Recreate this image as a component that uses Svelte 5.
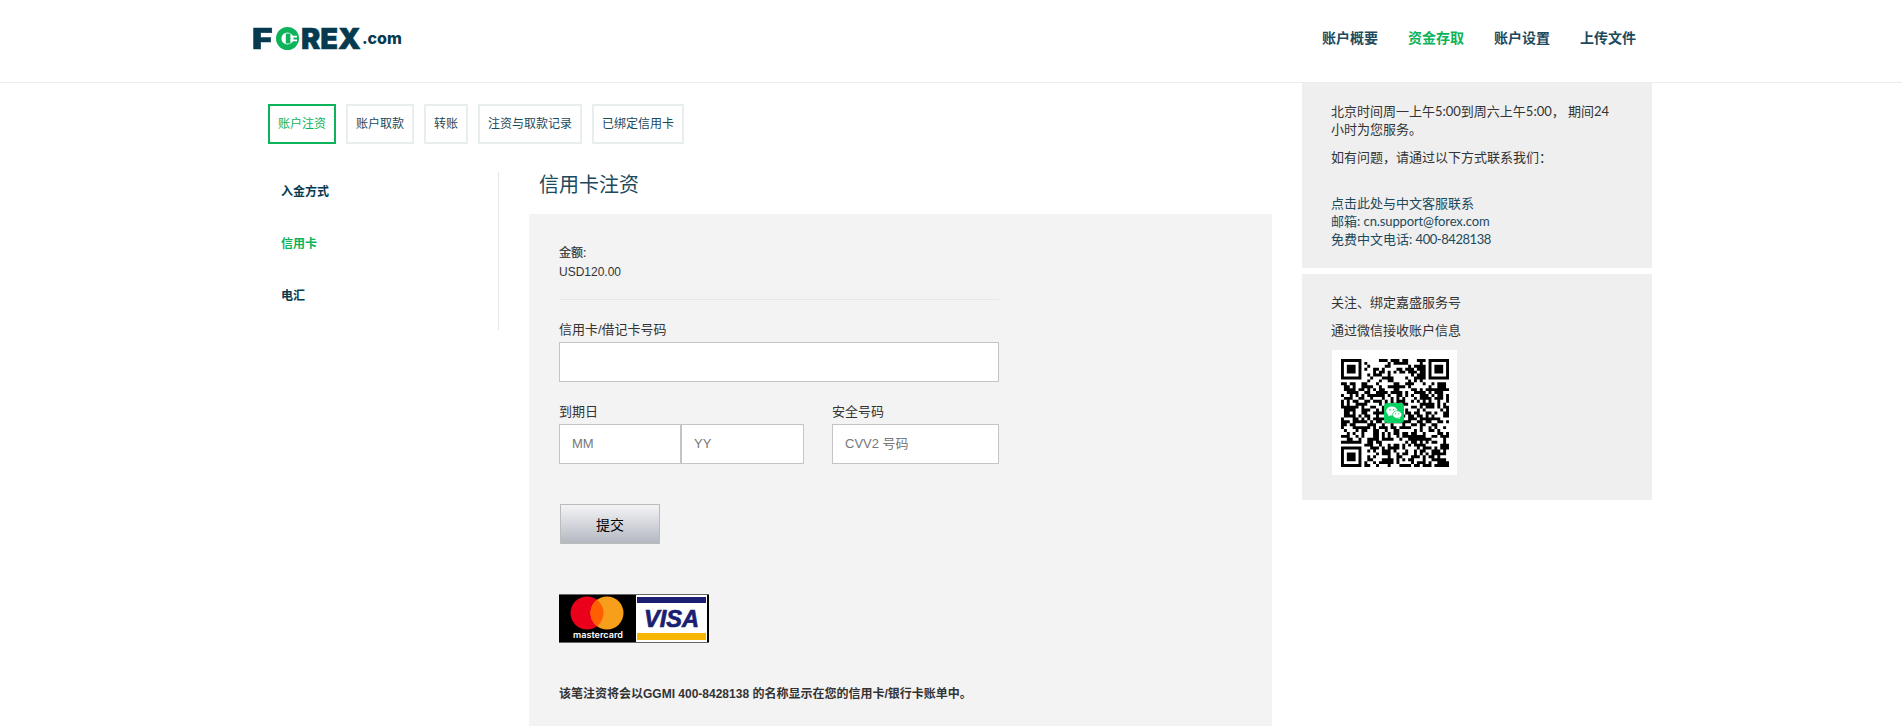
<script lang="ts">
  const navItems = [
    { label: '账户概要' },
    { label: '资金存取', active: true },
    { label: '账户设置' },
    { label: '上传文件' },
  ];
  const tabs = ['账户注资', '账户取款', '转账', '注资与取款记录', '已绑定信用卡'];
  const sideItems = [
    { label: '入金方式' },
    { label: '信用卡', active: true },
    { label: '电汇' },
  ];

  // QR modules: finder squares at three corners, seeded noise elsewhere
  const SIZE = 37;
  function buildQr(): string {
    let seed = 20240611;
    const next = () => {
      seed = (seed * 1664525 + 1013904223) >>> 0;
      return seed / 4294967296;
    };
    const inFinder = (x: number, y: number) =>
      (x < 8 && y < 8) || (x >= SIZE - 8 && y < 8) || (x < 8 && y >= SIZE - 8);
    const finder = (x0: number, y0: number) =>
      `M${x0} ${y0}h7v7h-7zM${x0 + 1} ${y0 + 1}v5h5v-5zM${x0 + 2} ${y0 + 2}h3v3h-3z`;
    let d = finder(0, 0) + finder(SIZE - 7, 0) + finder(0, SIZE - 7);
    for (let y = 0; y < SIZE; y++) {
      for (let x = 0; x < SIZE; x++) {
        if (inFinder(x, y)) continue;
        if (next() < 0.52) d += `M${x} ${y}h1v1h-1z`;
      }
    }
    return d;
  }
  const qrPath = buildQr();
</script>

<div class="page">
  <header class="topbar">
    <div class="logo" aria-label="FOREX.com">
      <span class="logo-word logo-f">F</span>
      <svg class="logo-o" viewBox="0 0 23 23" aria-hidden="true">
        <circle cx="11.5" cy="11.5" r="8.8" fill="none" stroke="#0cb35b" stroke-width="5.4" />
        <path d="M9.8 6.5h4.7v10H9.8z" fill="#0cb35b" />
        <path d="M14.5 8.8h6.5v1.7h-6.5zM14.5 12.5h6.5v1.7h-6.5z" fill="#fff" />
      </svg>
      <span class="logo-word">REX</span>
      <span class="logo-tld">.com</span>
    </div>
    <nav class="mainnav">
      {#each navItems as item}
        <span class:active={item.active}>{item.label}</span>
      {/each}
    </nav>
  </header>

  <div class="layout">
    <main class="content">
      <div class="tabs">
        {#each tabs as tab, i}
          <div class="tab" class:active={i === 0}>{tab}</div>
        {/each}
      </div>

      <div class="columns">
        <aside class="sidemenu">
          {#each sideItems as item}
            <div class="sideitem" class:active={item.active}>{item.label}</div>
          {/each}
        </aside>

        <section class="deposit">
          <h1>信用卡注资</h1>
          <div class="formpanel">
            <div class="amount">
              <div class="amount-label">金额:</div>
              <div>USD120.00</div>
            </div>
            <hr />
            <label class="field-label" for="card">信用卡/借记卡号码</label>
            <input id="card" class="input" type="text" />

            <div class="row">
              <div class="expiry">
                <label class="field-label" for="mm">到期日</label>
                <div class="expiry-inputs">
                  <input id="mm" class="input" type="text" placeholder="MM" />
                  <input class="input" type="text" placeholder="YY" />
                </div>
              </div>
              <div class="cvv">
                <label class="field-label" for="cvv">安全号码</label>
                <input id="cvv" class="input" type="text" placeholder="CVV2 号码" />
              </div>
            </div>

            <button class="submit" type="button">提交</button>

            <svg class="cards" viewBox="0 0 150 49" width="150" height="49" role="img" aria-label="Mastercard Visa">
              <defs>
                <clipPath id="mc-left"><circle cx="28" cy="19" r="16.5" /></clipPath>
              </defs>
              <rect width="150" height="49" fill="#000" />
              <rect width="150" height="1" fill="#666" />
              <rect y="48" width="150" height="1" fill="#666" />
              <circle cx="28" cy="19" r="16.5" fill="#eb001b" />
              <circle cx="48" cy="19" r="16.5" fill="#f79e1b" />
              <circle cx="48" cy="19" r="16.5" fill="#ff5f00" clip-path="url(#mc-left)" />
              <text class="mc-text" x="14" y="44" textLength="50" lengthAdjust="spacingAndGlyphs">mastercard</text>
              <rect x="77" y="1" width="71" height="47" fill="#fff" />
              <rect x="78" y="3" width="69" height="6" fill="#1a1f71" />
              <rect x="78" y="39" width="69" height="7" fill="#f7b600" />
              <text class="visa-text" x="85" y="33" textLength="55" lengthAdjust="spacingAndGlyphs">VISA</text>
            </svg>

            <p class="notice">该笔注资将会以GGMI 400-8428138 的名称显示在您的信用卡/银行卡账单中。</p>
          </div>
        </section>
      </div>
    </main>

    <aside class="rail">
      <div class="railbox contact">
        <p>北京时间周一上午5:00到周六上午5:00， 期间24小时为您服务。</p>
        <p class="gap">如有问题，请通过以下方式联系我们：</p>
        <p class="links">
          点击此处与中文客服联系<br />
          邮箱: <span class="email">cn.support@forex.com</span><br />
          免费中文电话: <span class="phone">400-8428138</span>
        </p>
      </div>
      <div class="railbox wechat">
        <p>关注、绑定嘉盛服务号</p>
        <p class="gap2">通过微信接收账户信息</p>
        <div class="qr">
          <svg class="qr-code" viewBox="0 0 {SIZE} {SIZE}" width="108" height="108" aria-hidden="true">
            <path d={qrPath} fill="#000" fill-rule="evenodd" />
          </svg>
          <svg class="qr-badge" viewBox="0 0 20 20" width="20" height="20" aria-hidden="true">
            <rect width="20" height="20" rx="3.5" fill="#07d160" />
            <ellipse cx="7.8" cy="8" rx="5.6" ry="4.6" fill="#fff" />
            <path d="M4.8 11l-.8 2.4 2.8-1.5z" fill="#fff" />
            <ellipse cx="13.2" cy="11.6" rx="4.6" ry="3.8" fill="#fff" stroke="#07d160" stroke-width=".7" />
            <path d="M15.4 14.4l.8 1.8-2.3-1.2z" fill="#fff" />
            <circle cx="6" cy="6.8" r=".75" fill="#07d160" />
            <circle cx="9.6" cy="6.8" r=".75" fill="#07d160" />
            <circle cx="11.6" cy="10.8" r=".6" fill="#07d160" />
            <circle cx="14.8" cy="10.8" r=".6" fill="#07d160" />
          </svg>
        </div>
      </div>
    </aside>
  </div>
</div>

<style>
  :global(body) {
    margin: 0;
    background: #fff;
    overflow: hidden;
  }

  .page {
    font-family: Lato, 'Noto Sans CJK SC', sans-serif;
    color: #333;
    height: 726px;
    overflow: hidden;
  }

  .topbar {
    height: 74px;
    border-bottom: 1px solid #e8eeee;
    padding: 0 266px 8px 252px;
    display: flex;
    align-items: center;
    justify-content: space-between;
  }

  .logo {
    display: flex;
    align-items: center;
    margin-top: 2px;
    color: #063a4f;
    font-family: Inter, 'Liberation Sans', sans-serif;
    line-height: 1;
  }

  .logo-word {
    font-size: 29px;
    font-weight: 900;
    -webkit-text-stroke: 0.5px #063a4f;
  }

  .logo-f {
    transform: scaleX(1.22);
    transform-origin: left center;
  }

  .logo-o {
    width: 23px;
    height: 23px;
    margin: 0 2px 0 7px;
  }

  .logo-tld {
    font-size: 16px;
    font-weight: 800;
    margin-left: 1px;
  }

  .mainnav {
    display: flex;
    gap: 30px;
    font-size: 14px;
    font-weight: 700;
    color: #1c4a5c;
  }

  .mainnav .active {
    color: #0cb35b;
  }

  .layout {
    display: flex;
    width: 1400px;
    margin-left: 252px;
  }

  .content {
    width: 1050px;
  }

  .tabs {
    display: flex;
    gap: 10px;
    margin: 21px 0 0 16px;
  }

  .tab {
    height: 40px;
    line-height: 36px;
    box-sizing: border-box;
    border: 2px solid #e8eeee;
    padding: 0 8px;
    font-size: 12px;
    color: #1c4a5c;
  }

  .tab.active {
    border-color: #0cb35b;
    color: #0cb35b;
  }

  .columns {
    display: flex;
    align-items: flex-start;
    margin-top: 28px;
  }

  .sidemenu {
    width: 217px;
    height: 148px;
    padding: 10px 0 0 29px;
    border-right: 1px solid #e6e6e6;
    display: flex;
    flex-direction: column;
    gap: 32px;
  }

  .sideitem {
    font-size: 12px;
    font-weight: 700;
    line-height: 20px;
    color: #063a4f;
  }

  .sideitem.active {
    color: #0cb35b;
  }

  .deposit {
    width: 743px;
    margin-left: 30px;
  }

  h1 {
    margin: 0;
    padding-left: 10px;
    height: 42px;
    line-height: 24px;
    font-size: 20px;
    font-weight: 400;
    color: #1c4a5c;
  }

  .formpanel {
    background: #f3f3f3;
    padding: 30px 273px 60px 30px;
    width: 440px;
    font-family: 'Liberation Sans', 'Noto Sans CJK SC', sans-serif;
  }

  .amount {
    font-size: 12px;
    line-height: 19px;
    color: #333;
  }

  .amount-label {
    -webkit-text-stroke: 0.2px #333;
  }

  hr {
    border: 0;
    height: 1px;
    background: #e6e6e6;
    margin: 17px 0 20px;
  }

  .field-label {
    display: block;
    font-size: 13px;
    line-height: 19px;
    margin-bottom: 3px;
    color: #333;
  }

  .input {
    display: block;
    width: 100%;
    height: 40px;
    box-sizing: border-box;
    border: 1px solid #c4c4c4;
    border-radius: 0;
    background: #fff;
    padding: 0 12px 2px;
    font: 13px 'Liberation Sans', 'Noto Sans CJK SC', sans-serif;
    outline: none;
  }

  .input::placeholder {
    color: #777;
    opacity: 1;
  }

  .row {
    display: flex;
    gap: 28px;
    margin-top: 20px;
  }

  .expiry {
    width: 245px;
  }

  .expiry-inputs {
    display: flex;
  }

  .expiry-inputs .input:first-child {
    width: 122px;
  }

  .expiry-inputs .input:last-child {
    width: 123px;
  }

  .cvv {
    width: 167px;
  }

  .submit {
    display: block;
    width: 100px;
    height: 40px;
    margin: 40px 0 0 1px;
    border: 1px solid #bbb;
    background: linear-gradient(#f4f4f6, #b3b8c1);
    font: 14px 'Liberation Sans', 'Noto Sans CJK SC', sans-serif;
    color: #000;
    padding: 0;
  }

  .cards {
    display: block;
    margin-top: 50px;
  }

  .mc-text {
    font: 600 9px Inter, sans-serif;
    fill: #fff;
  }

  .visa-text {
    font: italic 700 23.5px 'Liberation Sans', sans-serif;
    fill: #1a1f71;
    stroke: #1a1f71;
    stroke-width: 0.7px;
  }

  .notice {
    margin: 41px 0 0;
    font-size: 12px;
    font-weight: 700;
    line-height: 20px;
    color: #333;
  }

  .rail {
    width: 350px;
  }

  .railbox {
    background: #efefef;
    font-size: 13px;
    line-height: 18px;
    color: #333;
  }

  .railbox p {
    margin: 0;
  }

  .contact {
    padding: 19px 36px 20px 29px;
    margin-bottom: 6px;
  }

  .contact .gap {
    margin-top: 10px;
  }

  .contact .links {
    margin-top: 28px;
    color: #1c4a5c;
  }

  .email {
    letter-spacing: -0.12px;
  }

  .phone {
    letter-spacing: -0.45px;
  }

  .wechat {
    padding: 19px 29px 25px;
  }

  .wechat .gap2 {
    margin-top: 10px;
  }

  .qr {
    position: relative;
    width: 125px;
    height: 125px;
    margin: 11px 0 0 1px;
    background: #fff;
    display: flex;
    align-items: center;
    justify-content: center;
  }

  .qr-code {
    filter: blur(0.3px);
  }

  .qr-badge {
    position: absolute;
    left: 52px;
    top: 53px;
  }
</style>
